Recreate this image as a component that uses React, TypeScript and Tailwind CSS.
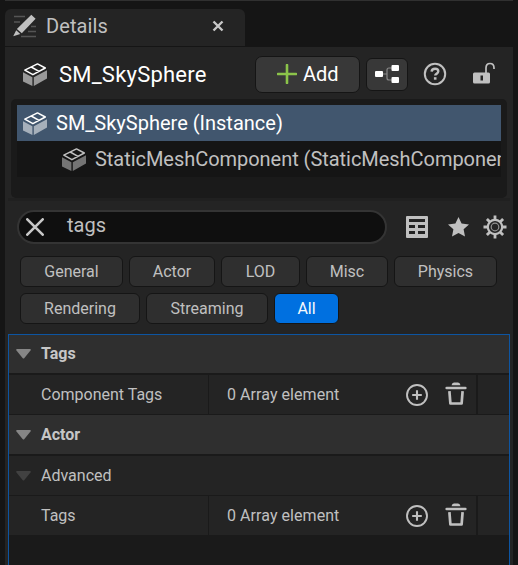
import React from "react";

function MeshIcon({ top, side }: { top: string; side: string }) {
  return (
    <svg width="24" height="23" viewBox="0 0 24 23" className="shrink-0">
      <path d="M0 9.2 9.4 14.2V23L0 18.4Z M10.8 14.2 24 7.2V15.6L10.800 23Z" fill={side} />
      <path d="M1.800 7.200 14.500 0.900 22.300 5 9.900 11.700Z M8.200 4 16 8.400" fill="none" stroke={top} strokeWidth="1.500" strokeLinejoin="round" />
    </svg>
  );
}

function DetailsIcon() {
  return (
    <svg width="24" height="24" viewBox="0 0 24 24" className="shrink-0">
      <path d="M1 2.500h11M1 8h6M18 12.500h5M15 17.500h8M8 22.500h15" stroke="#555" strokeWidth="1.400" />
      <path d="M18.300.8 22.600 4.700 8.800 19.300 3.900 15Z M3.200 16.200 7.300 20 .2 22.300Z" fill="#c0c0c0" />
    </svg>
  );
}

function Caret({ color }: { color: string }) {
  return (
    <svg width="15" height="10" viewBox="0 0 15 10" className="ml-[0.500px] shrink-0">
      <path d="M1 0h13q1.300.4.500 1.500L8.200 9.200q-.7.8-1.400 0L.5 1.500Q-.3.4 1 0Z" fill={color} />
    </svg>
  );
}

function PlusCircle() {
  return (
    <svg width="22" height="22" viewBox="0 0 22 22" fill="none" stroke="#c0c0c0" className="shrink-0">
      <circle cx="11" cy="11" r="10" strokeWidth="1.900" />
      <path d="M11 6.200v9.600M6.200 11h9.600" strokeWidth="2.100" />
    </svg>
  );
}

function Trash() {
  return (
    <svg width="22" height="24" viewBox="0 0 22 24" className="-mt-[2px] shrink-0">
      <path d="M6.500 3.200Q7 .5 9 .5h4q2 0 2.500 2.700Z" fill="#c0c0c0" />
      <path d="M1.600 6h18.800" stroke="#c0c0c0" strokeWidth="2.500" strokeLinecap="round" />
      <path d="M4.400 9.200l1 12.300h11.200l1-12.300" fill="none" stroke="#c0c0c0" strokeWidth="2.700" strokeLinejoin="round" />
    </svg>
  );
}

function Chip({ label, width, active = false }: { label: string; width: string; active?: boolean }) {
  return (
    <button
      className={`flex h-[31px] shrink-0 items-center justify-center rounded-[6px] border border-[#151515] text-[16px] ${width} ${
        active ? "bg-[#0070e0] text-[#f5f8fc]" : "bg-[#2f2f2f] text-[#c0c0c0]"
      }`}
    >
      {label}
    </button>
  );
}

function Section({ label }: { label: string }) {
  return (
    <div className="flex h-full items-center bg-[#2f2f2f] pl-[6px]">
      <Caret color="#868686" />
      <span className="ml-[10.500px] text-[16px] font-bold text-[#c6c6c6]">{label}</span>
    </div>
  );
}

function PropertyRow({ label }: { label: string }) {
  return (
    <div className="flex h-[39px] shrink-0 text-[16px] text-[#c0c0c0]">
      <div className="flex w-[199px] items-center bg-[#242424] pl-[32px]">{label}</div>
      <div className="ml-px flex w-[267px] items-center bg-[#242424] pl-[18px]">
        <span className="w-[179px] tracking-[0.060px]">0 Array element</span>
        <PlusCircle />
        <span className="w-[17px]" />
        <Trash />
      </div>
      <div className="ml-[2px] grow bg-[#242424]" />
    </div>
  );
}

export default function App() {
  return (
    <div className="flex h-[565px] w-[518px] flex-col overflow-hidden bg-[#151515] pl-[5px] pr-[5px] font-['Roboto',sans-serif] leading-none">
      <div className="h-px shrink-0 bg-[#303030]" />
      <div className="mt-[8px] flex h-[37px] w-[240px] shrink-0 items-center rounded-t-[6px] bg-[#242424] pb-[3px] pl-[8px]">
        <DetailsIcon />
        <span className="ml-[9px] w-[167px] text-[20px] tracking-[0.100px] text-[#c0c0c0]">Details</span>
        <svg width="12" height="12" viewBox="0 0 12 12" className="-ml-px">
          <path d="M1.500 1.500 10.500 10.500M10.500 1.500 1.500 10.500" stroke="#c8c8c8" strokeWidth="2.400" />
        </svg>
      </div>
      <div className="mt-px flex grow flex-col bg-[#242424]">
        <div className="flex h-[52px] shrink-0 items-center pl-[18px] pt-[2px]">
          <MeshIcon top="#ffffff" side="#999999" />
          <span className="ml-[12px] w-[196px] pt-[2px] text-[22px] tracking-[0.220px] text-white">SM_SkySphere</span>
          <button className="flex h-[37px] w-[105px] items-center rounded-[7px] border border-[#151515] bg-[#383838] pl-[21px] text-white">
            <svg width="20" height="20" viewBox="0 0 20 20" className="shrink-0"><path d="M10 1v18M1 10h18" stroke="#8bc34a" strokeWidth="2.600" strokeLinecap="round" /></svg>
            <span className="ml-[6px] text-[20px]">Add</span>
          </button>
          <button className="ml-[6px] flex h-[33px] w-[42px] items-center justify-center rounded-[6px] border border-[#151515] bg-[#383838]">
            <svg width="24" height="18" viewBox="0 0 24 18">
              <path d="M7 9h5M17 3h-3q-2 0-2 2v8q0 2 2 2h3" stroke="#888" strokeWidth="1.200" fill="none" />
              <g fill="white"><rect y="6" width="8" height="6" rx="1" /><rect x="16.500" width="7.500" height="6" rx="1" /><rect x="16.500" y="12" width="7.500" height="6" rx="1" /></g>
            </svg>
          </button>
          <svg width="24" height="24" viewBox="0 0 24 24" fill="none" stroke="#c0c0c0" className="ml-[15px]">
            <circle cx="12" cy="12" r="10.200" strokeWidth="2" />
            <path d="M8.600 9.600q.2-2.900 3.500-2.900 3.200 0 3.200 2.600 0 1.400-1.500 2.300-1.600 1-1.600 2" strokeWidth="2.400" />
            <path d="M12.200 15.200v2.500" strokeWidth="2.600" />
          </svg>
          <svg width="22" height="22" viewBox="0 0 22 22" className="mb-[3px] ml-[26px]">
            <path d="M13 11V6q0-4.500 4-4.500T21 6v1" fill="none" stroke="#c0c0c0" strokeWidth="1.700" />
            <path fillRule="evenodd" d="M1.500 10.500h14q1.500 0 1.500 1.500v8q0 1.500-1.500 1.500h-14Q0 21.500 0 20v-8q0-1.500 1.500-1.500M7.500 13.500v5h2.500v-5Z" fill="#c0c0c0" />
          </svg>
        </div>

        <div className="mx-[6px] h-[99px] shrink-0 rounded-[5px] bg-[#1a1a1a] px-[6px] pt-[6px]">
          <div className="flex h-[36px] items-center bg-[#41566e] pl-[6px]">
            <MeshIcon top="#ffffff" side="#a6b0bb" />
            <span className="ml-[9px] text-[20px] text-white">SM_SkySphere (Instance)</span>
          </div>
          <div className="flex h-[36px] items-center overflow-hidden bg-[#151515] pl-[45px]">
            <MeshIcon top="#c0c0c0" side="#747474" />
            <span className="ml-[9px] whitespace-nowrap text-[20px] tracking-[-0.040px] text-[#c0c0c0]">StaticMeshComponent (StaticMeshComponen</span>
          </div>
        </div>
        <div className="mx-[3px] h-[3px] shrink-0 bg-[#202020]" />

        <div className="mt-[9px] flex h-[34px] shrink-0 items-center pl-[12px]">
          <div className="flex h-[34px] w-[370px] items-center rounded-full border-2 border-[#343434] bg-[#0f0f0f] pl-[7px]">
            <svg width="18" height="18" viewBox="0 0 18 18"><path d="M1.300 1.300 16.700 16.700M16.700 1.300 1.300 16.700" stroke="#c8c8c8" strokeWidth="2.600" strokeLinecap="round" /></svg>
            <span className="ml-[23px] pb-[4px] text-[20px] text-[#c0c0c0]">tags</span>
          </div>
          <svg width="22" height="22" viewBox="0 0 22 22" className="ml-[19px]">
            <path fillRule="evenodd" d="M1 0h20q1 0 1 1v20q0 1-1 1H1q-1 0-1-1V1q0-1 1-1M3 3v3h16V3ZM3 9v3h6V9ZM12 9v3h7V9ZM3 15v3h6v-3ZM12 15v3h7v-3Z" fill="#c0c0c0" />
          </svg>
          <svg width="21" height="20" viewBox="0 0 21 20" className="ml-[20px]">
            <path d="M10.500 0 13.600 6.500 21 7.400 15.600 12.300 17 19.500 10.500 16 4 19.500 5.400 12.300 0 7.400 7.400 6.500Z" fill="#c0c0c0" />
          </svg>
          <svg width="24" height="24" viewBox="0 0 24 24" className="ml-[14px]" fill="none" stroke="#c0c0c0">
            <circle cx="12" cy="12" r="7.200" strokeWidth="2.200" />
            <circle cx="12" cy="12" r="3.800" strokeWidth="1.200" stroke="#929292" />
            <path d="M12 .5V5M12 19v4.500M.5 12H5M19 12h4.500M3.900 3.900 7 7M17 17l3.100 3.100M20.100 3.900 17 7M7 17l-3.100 3.100" strokeWidth="2.800" />
          </svg>
        </div>

        <div className="mt-[12px] flex shrink-0 gap-[6px] pl-[15px]">
          <Chip label="General" width="w-[103px]" />
          <Chip label="Actor" width="w-[86px]" />
          <Chip label="LOD" width="w-[79px]" />
          <Chip label="Misc" width="w-[82px]" />
          <Chip label="Physics" width="w-[103px]" />
        </div>
        <div className="mt-[6px] flex shrink-0 gap-[6px] pl-[15px]">
          <Chip label="Rendering" width="w-[120px]" />
          <Chip label="Streaming" width="w-[122px]" />
          <Chip label="All" width="w-[65px]" active />
        </div>

        <div className="mx-[3px] mt-[10px] flex h-[231px] shrink-0 flex-col border border-b-0 border-[#0d55a2] bg-[#1a1a1a]">
          <div className="h-[38px] shrink-0"><Section label="Tags" /></div>
          <div className="h-[2px] shrink-0" />
          <PropertyRow label="Component Tags" />
          <div className="mt-px h-[39px] shrink-0"><Section label="Actor" /></div>
          <div className="mt-[2px] flex h-[39px] shrink-0 items-center bg-[#242424] pl-[6px]">
            <Caret color="#414141" />
            <span className="ml-[10.500px] text-[16px] text-[#c0c0c0]">Advanced</span>
          </div>
          <div className="h-px shrink-0" />
          <PropertyRow label="Tags" />
        </div>
      </div>
    </div>
  );
}
